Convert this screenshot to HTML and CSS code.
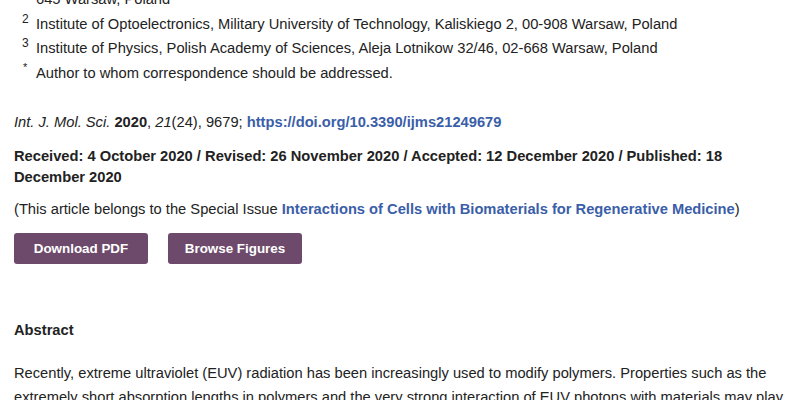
FILE: index.html
```html
<!DOCTYPE html>
<html lang="en">
<head>
    <meta charset="UTF-8">
    <meta name="viewport" content="width=device-width, initial-scale=1.0">
    <title>Int. J. Mol. Sci. 2020, 21(24), 9679</title>
    <link rel="stylesheet" href="styles.css">
</head>
<body>

<div class="article">
    <ul class="affiliations">
        <li><sup></sup>645 Warsaw, Poland</li>
        <li><sup>2</sup>Institute of Optoelectronics, Military University of Technology, Kaliskiego 2, 00-908 Warsaw, Poland</li>
        <li><sup>3</sup>Institute of Physics, Polish Academy of Sciences, Aleja Lotnikow 32/46, 02-668 Warsaw, Poland</li>
        <li><sup class="star">*</sup>Author to whom correspondence should be addressed.</li>
    </ul>

    <p class="cite"><em>Int. J. Mol. Sci.</em> <b>2020</b>, <em>21</em>(24), 9679; <a href="#">https://doi.org/10.3390/ijms21249679</a></p>

    <p class="dates">Received: 4 October 2020 / Revised: 26 November 2020 / Accepted: 12 December 2020 / Published: 18 December 2020</p>

    <p class="issue">(This article belongs to the Special Issue <a href="#">Interactions of Cells with Biomaterials for Regenerative Medicine</a>)</p>

    <div class="actions">
        <a class="btn" href="#">Download PDF</a>
        <a class="btn" href="#">Browse Figures</a>
    </div>

    <h3 class="abstract-title">Abstract</h3>
    <p class="abstract">Recently, extreme ultraviolet (EUV) radiation has been increasingly used to modify polymers. Properties such as the extremely short absorption lengths in polymers and the very strong interaction of EUV photons with materials may play an important role in the surface modification of polymers.</p>
</div>

</body>
</html>
```

FILE: styles.css
```css
body { margin: 0; background: #fff; color: #222; font-family: "Liberation Sans", Arial, sans-serif; font-size: 14.7px; }
.article { padding: 0 14px; width: 760px; }
.affiliations { list-style: none; margin: -13px 0 0; padding: 0 0 0 8px; }
.affiliations li { line-height: 24.5px; position: relative; padding-left: 14px; }
.affiliations sup { position: absolute; left: 0; top: -5px; font-size: 12px; }
.affiliations sup.star { top: -6px; left: 1px; font-size: 11px; }
.cite { margin: 27px 0 0; line-height: 21px; }
.cite a, .issue a { color: #3a5ea8; font-weight: bold; text-decoration: none; }
.dates { margin: 13px 0 0; line-height: 21px; font-weight: bold; width: 720px; }
.issue { margin: 11px 0 0; line-height: 21px; }
.actions { display: flex; gap: 20px; margin-top: 13px; }
.btn { display: block; width: 134px; height: 31px; line-height: 31px; text-align: center; background: #6d4a6b; color: #fff; font-size: 13.4px; font-weight: bold; text-decoration: none; border-radius: 3px; }
.abstract-title { margin: 56px 0 0; font-size: 14.7px; line-height: 21px; }
.abstract { margin: 20px 0 0; line-height: 24px; width: 772px; }
```
